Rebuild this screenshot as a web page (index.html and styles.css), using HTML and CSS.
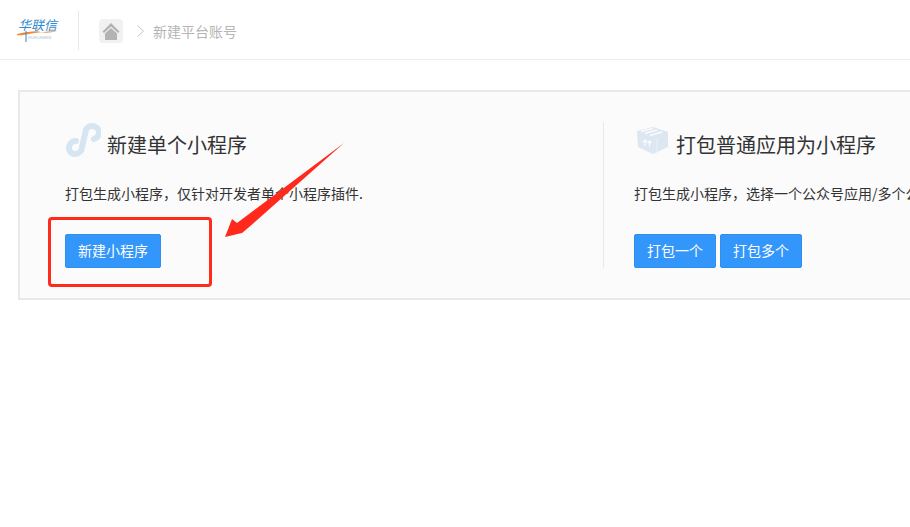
FILE: index.html
```html
<!DOCTYPE html>
<html lang="zh-CN">
<head>
<meta charset="utf-8">
<title>新建平台账号</title>
<link rel="stylesheet" href="styles.css">
</head>
<body>
<header class="topbar">
  <div class="logo">
    <span class="logo-name">华联信</span>
    <span class="logo-sub">HUALIANXIN</span>
    <svg class="logo-swoosh" viewBox="0 0 40 24" width="40" height="24"><path d="M0 16 Q18 12 24 14 T40 13 Q22 14 12 16 T0 17Z" fill="#ee8a3a"/><path d="M9 13 V24" stroke="#2b86c9" stroke-width="1"/></svg>
  </div>
  <nav class="crumbs">
    <span class="home">
      <svg viewBox="0 0 24 24" width="24" height="24"><path d="M12 4 L3.5 12.5 L5 14 L12 7.5 L19 14 L20.5 12.5Z" fill="#b3b3b3"/><path d="M12 9 L18 14.5 V21 H6 V14.5Z" fill="#b3b3b3"/></svg>
    </span>
    <svg class="chev" viewBox="0 0 9 14" width="9" height="14"><path d="M1.5 1.5 L7.5 7 L1.5 12.5" fill="none" stroke="#c4c4c4" stroke-width="1"/></svg>
    <span class="crumb-text">新建平台账号</span>
  </nav>
</header>
<main class="card">
  <section class="col col-first">
    <div class="title-row">
      <svg class="icon icon-link" viewBox="65 123 36 36" width="36" height="36"><path d="M76 141 C71 141 69 145 69 148 C69 152 72 154 75 154 C79 154 82 151 82 147 L85.5 132 C85.5 128 89 126 92 126 C96 126 99 129 99 132 C99 136 97 138 94 139" fill="none" stroke="#d6e5f2" stroke-width="6" stroke-linecap="round"/></svg>
      <h2>新建单个小程序</h2>
    </div>
    <p class="desc">打包生成小程序，仅针对开发者单个小程序插件.</p>
    <div class="btns"><button class="btn btn-wide">新建小程序</button></div>
  </section>
  <section class="col col-second">
    <div class="title-row title-row-second">
      <svg class="icon icon-box" viewBox="636 125 32 32" width="32" height="32"><path d="M637 131 L653 127 L668 132 V147 L653 154 L638 147Z" fill="#dce7f2"/><path d="M641 131.5 L653 128.5 M645 133.5 L657 130 M650 135.5 L662 132" fill="none" stroke="#fbfbfc" stroke-width="1.4"/><path d="M657 138 V153" stroke="#e9f0f7" stroke-width="1"/><path d="M645 146 V140 M643 142 L645 140 L647 142 M649.500 147 V141 M647.500 143 L649.500 141 L651.500 143" fill="none" stroke="#fbfbfc" stroke-width="1.2"/></svg>
      <h2>打包普通应用为小程序</h2>
    </div>
    <p class="desc">打包生成小程序，选择一个公众号应用/多个公众号应用打包生成小程序。</p>
    <div class="btns">
      <button class="btn">打包一个</button>
      <button class="btn">打包多个</button>
    </div>
  </section>
</main>
<div class="callout-box"></div>
<svg class="callout-arrow" viewBox="0 0 910 527" width="910" height="527"><polygon points="344,143 248,228 242,233 225,237 232,219 237,223" fill="#ff2a1c"/></svg>
</body>
</html>
```
FILE: styles.css
```css
* { box-sizing: border-box; }
html, body { margin: 0; height: 100%; overflow: hidden; background: #fff; }
body { font-family: "Noto Sans CJK SC", "Liberation Sans", sans-serif; color: #333; position: relative; }

.topbar { height: 60px; border-bottom: 1px solid #ececec; display: flex; align-items: flex-start; }
.logo { width: 79px; height: 39px; margin-top: 11px; padding-left: 18px; border-right: 1px solid #e6e6e6; position: relative; display: flex; flex-direction: column; }
.logo-name { font-size: 13px; line-height: 14px; margin-top: 7px; width: 40px; color: #2f8ccf; font-style: italic; font-weight: 400; }
.logo-sub { font-size: 4px; line-height: 5px; margin-top: 3px; margin-left: 10px; color: #9ab7cf; white-space: nowrap; }
.logo-swoosh { position: absolute; left: 17px; top: 7px; }
.crumbs { display: flex; align-items: center; margin: 19px 0 0 20px; }
.home { width: 24px; height: 24px; border-radius: 4px; background: #f1f1f1; display: flex; }
.chev { margin-left: 13px; }
.crumb-text { margin-left: 8px; font-size: 14px; color: #b5b5b5; line-height: 24px; }

.card { margin: 30px 0 0 18px; width: 1200px; height: 210px; padding: 30px 0; background: #fbfbfc; border: 2px solid #e9e9e9; display: flex; }
.col { height: 146px; flex: none; display: flex; flex-direction: column; }
.col-first { width: 583px; padding-left: 45px; }
.col-second { flex: 1; border-left: 1px solid #e9e9e9; padding-left: 30px; }
.title-row { display: flex; align-items: flex-end; height: 38px; }
.title-row .icon { flex: none; display: block; }
.title-row h2 { margin: 0 0 0 6px; font-size: 20px; font-weight: 400; line-height: 30px; color: #333; }
.icon-link { margin-bottom: 1px; }
.title-row-second .icon-box { margin-left: 2px; margin-bottom: 3px; }
.title-row-second h2 { margin-left: 8px; }
.desc { margin: 23px 0 0; font-size: 14px; line-height: 20px; white-space: nowrap; color: #333; }
.btns { margin-top: 31px; display: flex; gap: 4px; }
.btn { height: 34px; width: 82px; padding: 0 0 2px; border: 1px solid #2f8fee; border-radius: 2px; background: #3396fb; color: #fff; font: 400 14px "Noto Sans CJK SC", sans-serif; }
.btn-wide { width: 96px; }

.callout-box { position: absolute; left: 48px; top: 217px; width: 164px; height: 70px; border: 3px solid #ff2a1c; border-radius: 4px; }
.callout-arrow { position: absolute; left: 0; top: 0; pointer-events: none; }
```
